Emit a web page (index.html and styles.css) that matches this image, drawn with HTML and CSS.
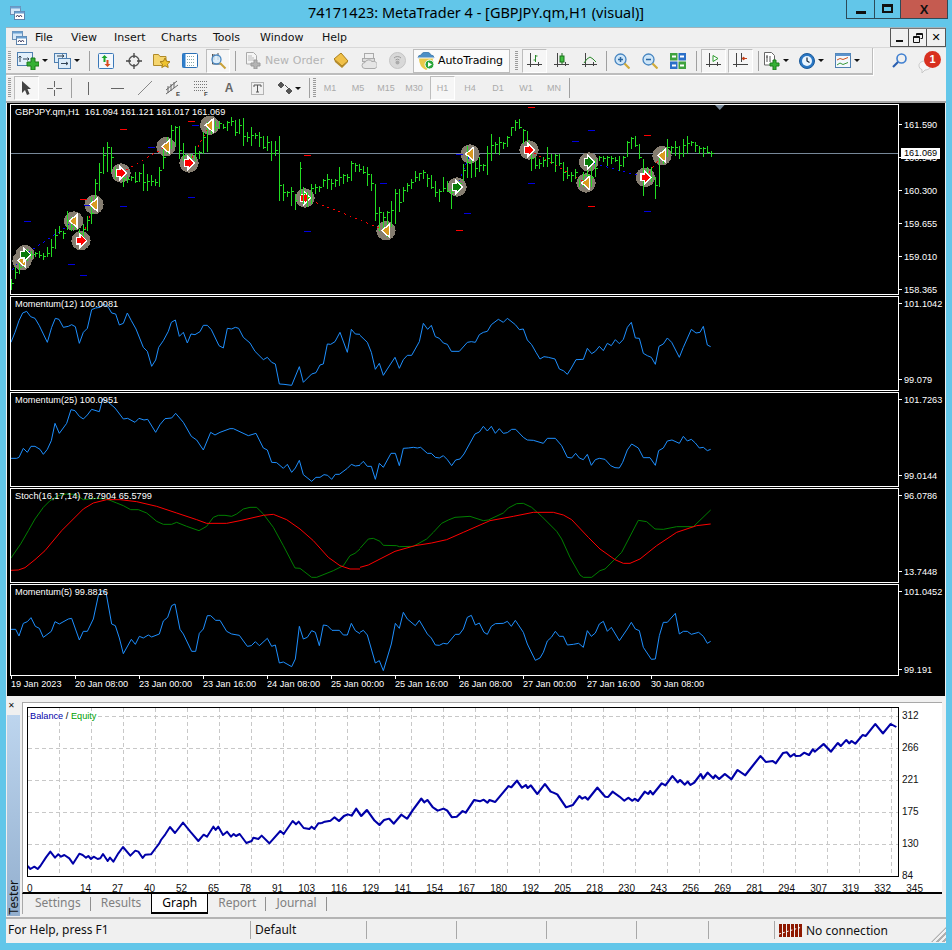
FILE: index.html
```html
<!DOCTYPE html>
<html lang="en">
<head>
<meta charset="utf-8">
<title>74171423: MetaTrader 4 - [GBPJPY.qm,H1 (visual)]</title>
<link rel="stylesheet" href="styles.css">
</head>
<body>
<header class="titlebar">
  <div class="title-left">
    <svg width="16" height="16" viewBox="0 0 16 16"><rect x="1.5" y="1.5" width="10" height="8" fill="#d5e8f8" stroke="#6a8fb5"/><rect x="1.5" y="1.5" width="10" height="2" fill="#6a9fd0"/><rect x="5.5" y="6.5" width="10" height="8" fill="#fff" stroke="#5c82aa"/><rect x="5.5" y="6.5" width="10" height="2" fill="#6a9fd0"/><path d="M7 12l1.500-2 1.500 2 1.500-2 1.500 2" fill="none" stroke="#446"/></svg>
  </div>
  <div class="title-text">74171423: MetaTrader 4 - [GBPJPY.qm,H1 (visual)]</div>
  <div class="winctl">
    <span class="wc wc-min"><i class="min-glyph"></i></span>
    <span class="wc wc-max"><i class="max-glyph"></i></span>
    <span class="wc wc-close">X</span>
  </div>
</header>

<main class="client">
  <nav class="menubar">
    <svg class="menu-icon" width="16" height="16" viewBox="0 0 16 16"><rect x="1.500" y="1.500" width="10" height="8" fill="#d5e8f8" stroke="#6a8fb5"/><rect x="1.500" y="1.500" width="10" height="2" fill="#6a9fd0"/><rect x="5.500" y="6.500" width="10" height="8" fill="#fff" stroke="#5c82aa"/><rect x="5.500" y="6.500" width="10" height="2" fill="#6a9fd0"/><path d="M7 12l1.500-2 1.500 2 1.500-2 1.500 2" fill="none" stroke="#446"/></svg>
    <span class="mi mi-file">File</span><span class="mi mi-view">View</span><span class="mi mi-insert">Insert</span><span class="mi mi-charts">Charts</span><span class="mi mi-tools">Tools</span><span class="mi mi-window">Window</span><span class="mi">Help</span>
    <div class="mdi">
      <span class="mdi-b"><i class="mdi-min"></i></span>
      <span class="mdi-b"><svg width="10" height="10" viewBox="0 0 10 10"><path d="M3.500 2.500V.5h6v5h-2M.5 3.500h6v6h-6z M.5 4.500h6M3.500 1.500h6" fill="none" stroke="#111"/></svg></span>
      <span class="mdi-b mdi-x">✕</span>
    </div>
  </nav>

  <div class="row row-1">
    <div class="bar bar-1">
      <i class="grip"></i>
      <span class="dd dd-a"><svg width="22" height="18" viewBox="0 0 22 18"><path d="M2.500 1v11h10M1 4h3M1 8h3M9 5h4" fill="none" stroke="#4a6f95"/><rect x=".5" y=".5" width="15" height="13" fill="#e3f0fb" stroke="#4f7fb0"/><path d="M3 10V4M1.500 5.500L3 4l1.500 1.500M6 7h6M10.500 5.500L12 7l-1.500 1.500" fill="none" stroke="#345"/><path d="M10 10h4V6h4v4h4v4h-4v4h-4v-4h-4z" fill="#34b034" stroke="#1a7a1a"/></svg><b class="arr"></b></span>
      <span class="dd dd-b"><svg width="17" height="16" viewBox="0 0 17 16"><rect x=".5" y=".5" width="12" height="9" fill="#dcecf9" stroke="#4f7fb0"/><rect x="4.500" y="5.500" width="12" height="10" fill="#dcecf9" stroke="#4f7fb0"/><path d="M3 3h7M8 1.500L10 3 8 4.500M7 10.500h7M12 9l2 1.500-2 1.500" fill="none" stroke="#345"/></svg><b class="arr"></b></span>
      <i class="sep s3"></i>
      <span class="b b-m2"><svg width="16" height="16" viewBox="0 0 16 16"><rect x=".5" y=".5" width="15" height="15" rx="1" fill="#f3f8fd" stroke="#3b78b8"/><path d="M5.500 9V5H3.500L6.500 2l3 3h-2v4z" fill="#19a52a"/><path d="M8.500 7v4h-2l3 3 3-3h-2V7z" fill="#d84a1e"/></svg></span>
      <span class="b"><svg width="16" height="16" viewBox="0 0 16 16"><circle cx="8" cy="8" r="5" fill="none" stroke="#555" stroke-width="1.300"/><path d="M8 0v5M8 11v5M0 8h5M11 8h5" stroke="#444" stroke-width="1.300"/></svg></span>
      <span class="b"><svg width="18" height="16" viewBox="0 0 18 16"><path d="M.5 3V1.500h5l1.500 2h6v9H.5z" fill="#f5d56e" stroke="#b08a28"/><path d="M12 5l1.600 3.300 3.400.4-2.500 2.400.7 3.400-3.200-1.700-3.200 1.700.7-3.400L7 8.700l3.400-.4z" fill="#eec32f" stroke="#a97f17"/></svg></span>
      <span class="b"><svg width="16" height="15" viewBox="0 0 16 15"><rect x=".5" y=".5" width="15" height="14" rx="1" fill="#fff" stroke="#2b70b5"/><rect x=".5" y=".5" width="3" height="14" fill="#2f7fcc"/><path d="M5 3.500h8M5 6.500h8M5 9.500h8M5 12.500h8" stroke="#8aa" stroke-dasharray="1 1"/></svg></span>
      <span class="press p24"><svg width="18" height="18" viewBox="0 0 18 18"><path d="M3.500 2v10h9M5 2v6M9 1v7" fill="none" stroke="#555"/><circle cx="7.500" cy="7.500" r="4.500" fill="#d8ecfb" fill-opacity=".8" stroke="#4a86bf" stroke-width="1.300"/><path d="M11 11l5.500 5.500" stroke="#c9a23a" stroke-width="2"/></svg></span>
      <i class="sep s5"></i>
      <svg class="ml9" width="16" height="17" viewBox="0 0 16 17"><path d="M1.500.5h7l3 3V12h-10z" fill="#f5f5f5" stroke="#aaa"/><path d="M3 4h4M3 6h6M3 8h6" stroke="#bbb"/><path d="M6 11h3V8h3v3h3v3h-3v3H9v-3H6z" fill="#b4b4b4" stroke="#999"/></svg>
      <span class="neworder">New Order</span>
      <span class="b b-m6"><svg width="16" height="15" viewBox="0 0 16 15"><path d="M1 6l7-6 7 8-6 5z" fill="#f0c048" stroke="#a87e1c"/><path d="M1 6l1 3 7 6 6-6v-1l-6 5z" fill="#b48a28"/></svg></span>
      <span class="b"><svg width="16" height="16" viewBox="0 0 16 16"><rect x="3.500" y=".5" width="9" height="6" fill="#eee" stroke="#aaa"/><rect x="1.500" y="5.500" width="12" height="3" fill="#ddd" stroke="#aaa"/><path d="M4 15.500a3 3 0 0 1 0-6 4 4 0 0 1 7-1 3.500 3.500 0 0 1 3 7z" fill="#e5e5e5" stroke="#aaa"/></svg></span>
      <span class="b"><svg width="17" height="17" viewBox="0 0 17 17"><circle cx="8.500" cy="8.500" r="8" fill="#d8d8d8" stroke="#c4c4c4"/><path d="M5 6a5 5 0 0 1 7 0M6.500 8a3 3 0 0 1 4 0" fill="none" stroke="#999"/><circle cx="8.500" cy="10.500" r="2" fill="#aaa"/></svg></span>
      <span class="auto">
        <svg width="18" height="18" viewBox="0 0 18 18"><path d="M1 6q0-3 3-3 1-3 5-3t5 3q3 0 3 3z" fill="#4d8fc5" stroke="#2d6a9f" stroke-width=".6"/><path d="M2 6h14q0 9-7 12-7-3-7-12z" fill="#e9c94a"/><path d="M1 6h16" stroke="#fff"/><circle cx="12.500" cy="12.500" r="4.500" fill="#2aa53a" stroke="#fff"/><path d="M11 10v5l4-2.500z" fill="#fff"/></svg>
        <span class="auto-t">AutoTrading</span>
      </span>
      <i class="grip g5"></i>
      <span class="press p25 pm4"><svg width="15" height="15" viewBox="0 0 15 15"><path d="M3.500 0v14M0 11.500h15M11.500 9v4" stroke="#444" fill="none"/><path d="M8.500 9V2M8.500 3h2M6.500 7h2" stroke="#2b8a2b" fill="none"/></svg></span>
      <span class="b"><svg width="15" height="15" viewBox="0 0 15 15"><path d="M3.500 0v14M0 11.500h15M11.500 9v4" stroke="#444" fill="none"/><rect x="6" y="3" width="4" height="6" fill="#3fc13f" stroke="#1d6f1d"/><path d="M8 0v3M8 9v2" stroke="#1d6f1d"/></svg></span>
      <span class="b"><svg width="15" height="15" viewBox="0 0 15 15"><path d="M3.500 0v14M0 11.500h15M11.500 9v4" stroke="#444" fill="none"/><path d="M2 10l3-4 3-2 3 2 3 3" stroke="#2b8a2b" fill="none"/></svg></span>
      <i class="sep s3"></i>
      <span class="b b-m1"><svg width="16" height="16" viewBox="0 0 16 16"><circle cx="6.500" cy="6.500" r="5.500" fill="#cfe6f8" stroke="#4785c0" stroke-width="1.300"/><path d="M4 6.500h5M6.500 4v5" stroke="#2a66a0" stroke-width="1.500"/><path d="M10.500 10.500l5 5" stroke="#d0ab3a" stroke-width="2.200"/></svg></span>
      <span class="b"><svg width="16" height="16" viewBox="0 0 16 16"><circle cx="6.500" cy="6.500" r="5.500" fill="#cfe6f8" stroke="#4785c0" stroke-width="1.300"/><path d="M4 6.500h5" stroke="#2a66a0" stroke-width="1.500"/><path d="M10.500 10.500l5 5" stroke="#d0ab3a" stroke-width="2.200"/></svg></span>
      <span class="b"><svg width="16" height="16" viewBox="0 0 16 16"><rect width="7.500" height="7.500" fill="#3fa23f"/><rect x="8.500" width="7.500" height="7.500" fill="#2b6fc8"/><rect y="8.500" width="7.500" height="7.500" fill="#2b6fc8"/><rect x="8.500" y="8.500" width="7.500" height="7.500" fill="#3fa23f"/><path d="M2 3.500h4M10 3.500h4M2 12.500h4M10 12.500h4" stroke="#fff" stroke-width="2"/></svg></span>
      <i class="sep s4"></i>
      <span class="press p25 pm4"><svg width="15" height="15" viewBox="0 0 15 15"><path d="M3.500 0v14M0 11.500h15M11.500 9v4" stroke="#444" fill="none"/><path d="M7 2.500v6l5-3z" fill="#fff" stroke="#2b9a2b"/></svg></span>
      <span class="press p25 pm2"><svg width="15" height="15" viewBox="0 0 15 15"><path d="M3.500 0v14M0 11.500h15M8.500 0v9" stroke="#444" fill="none"/><path d="M14 5.500h-3V4L9 5.500 11 7V5.500" stroke="#c8401a" fill="#c8401a"/></svg></span>
      <i class="sep s5"></i>
      <span class="dd dd-c"><svg width="17" height="18" viewBox="0 0 17 18"><path d="M1.500.5h7l3 3V13h-10z" fill="#fff" stroke="#666"/><path d="M4 3v7M3 5h2M7 4v6" stroke="#555"/><path d="M7 11h3V8h3v3h3v3h-3v4h-3v-4H7z" fill="#34b034" stroke="#1a7a1a"/></svg><b class="arr"></b></span>
      <span class="dd dd-c"><svg width="16" height="16" viewBox="0 0 16 16"><circle cx="8" cy="8" r="7.500" fill="#2a77c4" stroke="#1b5a9a"/><circle cx="8" cy="8" r="5" fill="#eaf5ff"/><path d="M8 4.500V8l2.500 1.500" fill="none" stroke="#123" stroke-width="1.200"/></svg><b class="arr"></b></span>
      <span class="dd dd-c"><svg width="16" height="15" viewBox="0 0 16 15"><rect x=".5" y=".5" width="15" height="14" fill="#f3f8fd" stroke="#4f7fb0"/><rect x=".5" y=".5" width="15" height="2.500" fill="#5b93cc"/><path d="M2 7l3-1.500 3 1 5-2" fill="none" stroke="#d0541e"/><path d="M2 12l3-2 3 1.500 5-2" fill="none" stroke="#3a9a3a"/></svg><b class="arr"></b></span>
    </div>
    <svg class="search" width="15" height="15" viewBox="0 0 15 15"><circle cx="9.500" cy="5.500" r="4.500" fill="none" stroke="#3f7fd0" stroke-width="1.600"/><path d="M6 9l-5 5" stroke="#2a5fb0" stroke-width="2.200"/></svg>
    <span class="chat">
      <svg width="14" height="14" viewBox="0 0 14 14"><path d="M7 2c3.300 0 6 1.800 6 4.300S10.300 11 7 11l-3 3v-3.400C2 10 1 8.400 1 6.300 1 3.800 3.700 2 7 2z" fill="#f6f6f6" stroke="#c8c8c8"/></svg>
      <span class="badge">1</span>
    </span>
  </div>

  <div class="row row-2">
    <div class="bar bar-2">
      <i class="grip"></i>
      <span class="press p25 pm3"><svg width="11" height="15" viewBox="0 0 11 15"><path d="M1 0v12l3-3 2 5 2.500-1-2-5H10z" fill="#444"/></svg></span>
      <span class="b b-m1"><svg width="15" height="15" viewBox="0 0 15 15"><path d="M7.500 0v6M7.500 9v6M0 7.500h6M9 7.500h6" stroke="#666"/></svg></span>
      <i class="sep s3"></i>
      <span class="b b-m2"><svg width="3" height="13" viewBox="0 0 3 13"><path d="M1.500 0v13" stroke="#666"/></svg></span>
      <span class="b b-m1"><svg width="13" height="3" viewBox="0 0 13 3"><path d="M0 1.500h13" stroke="#666"/></svg></span>
      <span class="b"><svg width="14" height="14" viewBox="0 0 14 14"><path d="M0 14L14 0" stroke="#888"/></svg></span>
      <span class="b"><svg width="16" height="16" viewBox="0 0 16 16"><path d="M1 10L12 1M1 14L13 5M3 13V6M6 11V4M9 8V2" stroke="#666" fill="none"/><text x="11" y="16" class="sv-e">E</text></svg></span>
      <span class="b"><svg width="15" height="16" viewBox="0 0 15 16"><path d="M0 1.500h14M0 4.500h14M0 7.500h14M0 10.500h12" stroke="#777" stroke-dasharray="1 1"/><text x="10" y="16" class="sv-e">F</text></svg></span>
      <span class="b glyph-a">A</span>
      <span class="b"><svg width="13" height="13" viewBox="0 0 13 13"><rect x=".5" y=".5" width="12" height="12" fill="none" stroke="#777" stroke-dasharray="1 1"/><path d="M3 3h7v2M6.500 3v7M5 10h3M3 3v2" fill="none" stroke="#555"/></svg></span>
      <span class="dd dd-d"><svg width="14" height="13" viewBox="0 0 14 13"><path d="M3 0l3 3-3 3-3-3zM7 3l4 4M11 6l3 3-3 3-3-3z" fill="#555" stroke="#555"/></svg><b class="arr"></b></span>
      <i class="sep s2"></i>
      <i class="grip g3"></i>
      <span class="b tf">M1</span><span class="b tf">M5</span><span class="b tf">M15</span><span class="b tf">M30</span>
      <span class="press p25 pm2 tf">H1</span>
      <span class="b b-m1 tf">H4</span><span class="b tf">D1</span><span class="b tf">W1</span><span class="b tf">MN</span>
      <i class="sep s1"></i>
    </div>
  </div>

  <section class="chart">
    <div class="pane pane-main">
      <div class="plot">
        <svg class="plotsvg" width="887" height="189" viewBox="11 106 887 189">
          <path class="priceline" d="M11 154.500H898"/>
          <g transform="translate(0 105) scale(.33333)" class="z">
            <g class="disc"><circle cx="75" cy="452" r="29"/><circle cx="66" cy="470" r="29"/><circle cx="221" cy="351" r="29"/><circle cx="243" cy="410" r="29"/><circle cx="282" cy="302" r="29"/><circle cx="363" cy="207" r="29"/><circle cx="498" cy="128" r="29"/><circle cx="567" cy="177" r="29"/><circle cx="629" cy="64" r="29"/><circle cx="915" cy="282" r="29"/></g>
            <path class="dash-b" d="M36 498L75 452L190 375L221 351"/>
            <path class="dash-r" d="M243 410L282 302M363 207L498 128M567 177L629 64"/>
            <path class="mk-r" d="M360 78h22M240 286h22M564 52h22M912 154h22"/>
            <path class="mk-b" d="M72 352h22M444 130h22M360 307h22M204 481h22M240 514h22M564 280h22M576 64h22M252 304h20M912 382h22"/>
            <path class="mk-g" d="M360 78h0M354 -3M363 78"/>
            <path class="bars" d="M36 525V557M36 540h6M48 490V525M48 505h6M60 470V510M60 490h6M72 440V490M72 462h6M84 435V470M84 450h6M96 440V465M96 452h6M108 445V460M108 450h6M120 442V462M120 455h6M132 448V468M132 458h6M144 430V460M144 450h6M156 405V460M156 430h6M168 375V435M168 395h6M180 365V390M180 382h6M192 380V405M192 390h6M204 320V378M204 350h6M216 340V380M216 368h6M228 350V378M228 358h6M240 375V425M240 390h6M252 360V410M252 378h6M264 335V380M264 350h6M276 280V360M276 330h6M288 225V295M288 240h6M300 178V260M300 205h6M312 130V210M312 155h6M324 114V205M324 130h6M336 130V205M336 160h6M348 190V225M348 205h6M360 190V225M360 215h6M372 215V248M372 225h6M384 215V238M384 228h6M396 215V232M396 222h6M408 205V237M408 232h6M420 205V235M420 208h6M432 180V260M432 235h6M444 210V262M444 232h6M456 212V245M456 232h6M468 225V245M468 235h6M480 190V248M480 200h6M492 120V195M492 160h6M504 100V150M504 125h6M516 62V135M516 80h6M528 65V125M528 70h6M540 65V165M540 140h6M552 118V170M552 155h6M564 150V195M564 170h6M576 150V190M576 178h6M588 125V170M588 150h6M600 140V165M600 145h6M612 85V150M612 100h6M624 55V145M624 70h6M636 50V90M636 62h6M648 50V80M648 70h6M660 52V75M660 58h6M672 60V75M672 72h6M684 50V80M684 55h6M696 40V65M696 52h6M708 48V95M708 85h6M720 45V90M720 65h6M732 42V125M732 98h6M744 85V115M744 100h6M756 70V125M756 95h6M768 88V105M768 95h6M780 85V130M780 100h6M792 95V135M792 130h6M804 95V140M804 115h6M816 110V170M816 150h6M828 110V155M828 140h6M840 95V290M840 245h6M852 240V290M852 265h6M864 260V280M864 265h6M876 250V305M876 262h6M888 270V318M888 290h6"/>
            <g class="ar-o"><use href="#ol" x="66" y="470"/><use href="#ol" x="221" y="351"/><use href="#ol" x="282" y="302"/><use href="#ol" x="498" y="128"/><use href="#ol" x="629" y="64"/></g>
            <use href="#gr" x="75" y="452"/>
            <use href="#rd" x="243" y="410"/><use href="#rd" x="363" y="207"/><use href="#rd" x="567" y="177"/><use href="#rd" x="915" y="282"/>
          </g>
          <g transform="translate(300 105) scale(.33333)" class="z">
            <g class="disc"><circle cx="258" cy="380" r="29"/><circle cx="471" cy="249" r="29"/><circle cx="510" cy="150" r="29"/><circle cx="687" cy="138" r="29"/><circle cx="866" cy="174" r="29"/><circle cx="858" cy="237" r="29"/><circle cx="1036" cy="220" r="29"/><circle cx="1086" cy="155" r="29"/></g>
            <path class="dash-r" d="M15 282L258 380M687 138L858 237M1036 220L1086 155"/>
            <path class="dash-b" d="M471 249L510 150M866 174L1036 220"/>
            <path class="mk-r" d="M684 10h21M12 154h21M468 380h22M864 307h21M1032 94h21"/>
            <path class="mk-b" d="M240 238h21M12 382h21M492 328h21M468 151h22M684 238h21M816 112h21M864 79h21M1032 322h21"/>
            <path class="bars" d="M0 175V275M0 195h6M12 250V300M12 270h6M24 265V310M24 280h6M36 240V300M36 255h6M48 240V270M48 250h6M60 245V265M60 250h6M72 225V250M72 230h6M84 210V255M84 228h6M96 225V258M96 240h6M108 225V250M108 230h6M120 188V245M120 222h6M132 210V240M132 215h6M144 210V235M144 220h6M156 172V230M156 180h6M168 178V205M168 185h6M180 180V205M180 198h6M192 185V210M192 205h6M204 190V245M204 212h6M216 210V260M216 240h6M228 240V350M228 330h6M240 310V380M240 325h6M252 325V375M252 340h6M264 320V400M264 325h6M276 290V370M276 320h6M288 255V360M288 270h6M300 255V325M300 295h6M312 250V295M312 260h6M324 238V265M324 245h6M336 225V255M336 235h6M348 200V235M348 220h6M360 208V230M360 210h6M372 198V225M372 205h6M384 210V250M384 225h6M396 212V255M396 250h6M408 230V280M408 265h6M420 255V295M420 262h6M432 220V265M432 255h6M444 230V265M444 262h6M456 255V315M456 265h6M468 235V275M468 250h6M480 235V265M480 240h6M492 180V230M492 200h6M504 125V222M504 175h6M516 150V222M516 170h6M528 170V220M528 195h6M540 160V205M540 185h6M552 180V200M552 185h6M564 125V212M564 150h6M576 90V170M576 125h6M588 115V150M588 122h6M600 100V152M600 115h6M612 115V135M612 120h6M624 95V130M624 100h6M636 68V95M636 70h6M648 48V80M648 55h6M660 45V75M660 70h6M672 75V120M672 80h6M684 80V140M684 120h6M696 130V200M696 165h6M708 160V195M708 185h6M720 165V195M720 180h6M732 160V190M732 170h6M744 130V190M744 165h6M756 150V180M756 175h6M768 150V205M768 155h6M780 150V185M780 180h6M792 175V230M792 205h6M804 190V225M804 215h6M816 205V235M816 215h6M828 195V225M828 205h6M840 225V250M840 240h6M852 205V250M852 215h6M864 175V255M864 215h6M876 175V250M876 220h6M888 165V220M888 195h6M900 155V170M900 160h6M912 155V175M912 165h6M924 155V185M924 160h6M936 155V180M936 165h6M948 160V175M948 170h6M960 155V200M960 185h6M972 155V190M972 160h6M984 110V160M984 115h6M996 100V135M996 105h6M1008 95V130M1008 125h6M1020 120V165M1020 160h6M1032 165V275M1032 210h6M1044 190V235M1044 215h6M1056 190V235M1056 220h6M1068 220V285M1068 245h6M1080 150V250M1080 155h6M1092 135V180M1092 150h6M1104 105V160M1104 130h6M1116 125V150M1116 130h6M1128 110V155M1128 130h6M1140 125V165M1140 150h6M1152 105V160M1152 125h6M1164 97V150M1164 120h6M1176 110V125M1176 115h6M1188 115V145M1188 125h6M1200 125V150M1200 135h6M1212 128V158M1212 135h6M1224 125V150M1224 145h6M1236 140V158M1236 148h6"/>
            <use href="#ol" x="258" y="380"/><use href="#ol" x="510" y="150"/><use href="#ol" x="858" y="237"/><use href="#ol" x="1086" y="155"/>
            <use href="#gr" x="471" y="249"/><use href="#gr" x="866" y="174"/>
            <use href="#rd" x="687" y="138"/><use href="#rd" x="1036" y="220"/>
          </g>
          <path class="shift" d="M715 106h9.500l-4.700 5z"/>
          <defs>
            <path id="ol" d="M10-19V19L-13 0z" fill="#d99a20" stroke="#fff" stroke-width="4"/>
            <path id="gr" d="M-13-10h10v-10L17 0-3 20V10h-10z" fill="#0a7a0a" stroke="#fff" stroke-width="4"/>
            <path id="rd" d="M-13-10h10v-10L17 0-3 20V10h-10z" fill="#f00" stroke="#fff" stroke-width="4"/>
          </defs>
        </svg>
        <span class="plabel">GBPJPY.qm,H1&nbsp; 161.094 161.121 161.017 161.069</span>
      </div>
      <div class="axis axis-main">
        <span>161.590</span><span>160.945</span><span>160.300</span><span>159.655</span><span>159.010</span><span>158.365</span>
        <span class="curprice">161.069</span>
      </div>
    </div>

    <div class="pane pane-sub">
      <div class="plot">
        <svg class="plotsvg" width="887" height="93" viewBox="11 298 887 93">
          <g transform="translate(0 295) scale(.33333)"><path class="ln-blue" d="M33 145L45 115L57 80L68 57L80 52L92 68L105 73L118 95L142 145L155 100L166 73L177 76L190 100L205 97L215 92L226 98L238 148L250 115L262 103L275 47L287 42L300 40L312 30L325 40L335 57L347 60L358 93L370 88L382 57L394 80L408 105L430 160L442 172L455 217L467 198L476 160L490 140L505 112L514 85L526 78L538 127L550 115L562 147L573 120L585 122L600 113L610 94L622 94L634 107L657 155L670 162L682 103L695 105L706 100L716 103L730 130L750 147L765 172L790 197L802 190L815 205L826 210L838 270L852 271L875 274L898 218L910 265L935 240L948 236L960 213L970 210L982 150L992 151L1005 143L1020 115L1042 175L1054 106L1066 120L1080 121"/></g>
          <g transform="translate(360 295) scale(.33333)"><path class="ln-blue" d="M0 124L22 145L34 175L46 226L58 208L70 244L82 225L105 190L118 223L130 197L142 184L155 184L178 143L190 88L203 106L214 94L226 128L238 133L250 147L262 151L274 172L298 172L322 145L334 143L346 145L358 122L370 115L382 112L394 92L415 76L430 85L442 73L466 92L478 107L490 105L502 138L515 152L528 175L540 195L552 188L565 190L585 195L598 225L610 230L622 241L634 222L648 197L670 196L682 163L695 179L706 172L718 157L730 170L742 148L754 155L766 137L778 149L790 136L802 100L814 85L826 132L838 133L850 178L862 185L874 190L886 211L897 157L910 150L922 132L935 145L958 190L970 160L994 106L1008 117L1020 115L1030 97L1042 153L1052 158"/></g>
        </svg>
        <span class="plabel">Momentum(12) 100.0081</span>
      </div>
      <div class="axis"><span>101.1042</span><span>99.079</span></div>
    </div>

    <div class="pane pane-sub">
      <div class="plot">
        <svg class="plotsvg" width="887" height="93" viewBox="11 394 887 93">
          <g transform="translate(0 295) scale(.33333)"><path class="ln-blue" d="M33 493L50 493L57 490L70 463L82 475L93 457L105 457L120 466L130 481L142 466L154 440L165 388L178 418L200 388L213 347L225 350L238 367L250 375L262 363L275 346L298 353L308 315L325 325L345 342L370 375L383 373L405 385L417 373L432 378L443 376L467 415L480 392L495 374L515 372L527 358L550 385L574 427L590 438L610 468L632 415L645 423L660 415L690 404L700 404L745 425L768 418L790 462L802 468L815 505L830 506L850 523L862 511L875 535L886 522L898 499L910 542L935 562L948 550L960 550L972 542L983 544L995 556L1006 541L1018 541L1042 523L1054 511L1066 516L1080 514"/></g>
          <g transform="translate(360 295) scale(.33333)"><path class="ln-blue" d="M0 512L10 502L22 517L34 517L46 556L58 508L70 520L93 478L106 478L118 515L130 463L145 462L160 460L172 462L182 460L202 478L214 478L226 490L238 492L250 485L262 497L275 515L287 498L300 495L312 480L345 420L358 414L370 397L382 411L394 397L406 418L418 404L430 418L442 416L455 406L467 406L490 430L502 438L520 439L550 448L562 433L586 433L605 455L622 490L635 492L647 478L658 492L670 497L682 481L694 514L706 497L718 493L735 496L752 515L765 521L778 522L788 505L802 468L815 450L835 462L850 491L870 491L886 514L896 470L910 462L922 441L936 438L958 448L970 427L982 441L994 436L1006 447L1018 462L1030 460L1042 470L1052 466"/></g>
        </svg>
        <span class="plabel">Momentum(25) 100.0951</span>
      </div>
      <div class="axis"><span>101.7263</span><span>99.0144</span></div>
    </div>

    <div class="pane pane-sub">
      <div class="plot">
        <svg class="plotsvg" width="887" height="93" viewBox="11 490 887 93">
          <g transform="translate(0 490) scale(.33333)"><path class="ln-green" d="M33 207L62 165L85 125L105 90L130 55L150 35L175 20L200 15L225 16L250 32L290 28L320 30L350 42L370 50L392 62L415 62L440 72L470 97L490 106L515 106L530 100L560 112L597 125L620 112L640 85L655 79L675 79L695 82L710 75L730 60L750 55L770 55L790 75L820 115L850 170L885 237L900 238L935 265L950 265L1000 245L1030 230L1050 200L1065 193L1080 180"/><path class="ln-red" d="M33 244L55 243L75 236L105 212L135 185L185 125L250 60L280 42L320 32L360 32L410 38L470 52L530 72L590 92L620 103L680 103L720 95L790 79L820 76L860 92L900 120L940 155L985 205L1020 230L1050 240L1080 240"/></g>
          <g transform="translate(360 490) scale(.33333)"><path class="ln-green" d="M0 178L25 150L40 148L60 157L70 169L110 170L118 173L160 172L200 150L220 130L245 103L265 93L285 85L330 82L345 87L370 95L385 93L430 72L445 57L470 44L490 43L515 55L545 82L590 127L605 150L630 205L660 258L670 265L695 265L720 245L735 240L750 225L785 190L835 94L860 98L885 120L910 121L950 113L1000 113L1052 63"/><path class="ln-red" d="M0 235L25 228L105 187L165 170L215 162L260 152L310 130L390 95L460 82L520 70L580 70L610 78L635 92L685 145L720 180L765 212L790 223L810 223L840 210L890 170L950 130L1010 110L1052 105"/></g>
        </svg>
        <span class="plabel">Stoch(16,17,14) 78.7904 65.5799</span>
      </div>
      <div class="axis"><span>96.0786</span><span>13.7448</span></div>
    </div>

    <div class="pane pane-last">
      <div class="plot">
        <svg class="plotsvg" width="887" height="90" viewBox="11 586 887 90">
          <g transform="translate(0 490) scale(.33333)"><path class="ln-blue" d="M33 421L47 421L57 441L70 403L82 398L93 386L106 412L118 418L130 445L154 427L165 398L178 405L205 390L215 388L238 453L250 427L262 427L280 390L295 320L305 305L318 310L335 405L346 410L358 447L370 494L394 451L406 466L418 442L430 447L445 438L455 444L478 435L490 396L503 385L515 350L525 345L540 421L550 435L575 487L587 487L598 433L610 420L622 380L632 380L647 394L660 394L680 427L695 435L718 439L742 472L754 470L766 458L778 470L802 448L815 472L826 468L838 522L850 519L875 533L886 510L898 412L910 450L922 445L935 425L946 430L958 470L970 408L982 410L996 424L1018 424L1030 438L1042 438L1054 403L1066 425L1080 434"/></g>
          <g transform="translate(360 490) scale(.33333)"><path class="ln-blue" d="M0 430L10 424L22 438L46 522L58 515L70 545L94 465L106 403L118 418L130 370L142 390L166 410L178 394L202 435L214 447L226 468L238 469L250 463L262 465L286 436L298 436L310 420L322 385L334 379L346 408L358 402L372 430L382 436L394 412L406 404L430 403L442 397L454 412L466 394L490 430L502 465L526 514L540 507L550 490L562 456L574 445L586 427L598 442L610 442L622 468L640 466L656 463L670 475L682 425L694 442L706 432L718 405L730 397L742 427L754 415L778 455L802 420L814 400L826 420L838 425L850 475L874 511L886 510L898 440L910 400L922 400L946 373L958 435L970 427L982 427L994 436L1016 430L1030 442L1042 463L1052 457"/></g>
        </svg>
        <span class="plabel">Momentum(5) 99.8816</span>
      </div>
      <div class="axis"><span>101.0452</span><span>99.191</span></div>
    </div>

    <div class="timeaxis">
      <span>19 Jan 2023</span><span>20 Jan 08:00</span><span>23 Jan 00:00</span><span>23 Jan 16:00</span><span>24 Jan 08:00</span><span>25 Jan 00:00</span><span>25 Jan 16:00</span><span>26 Jan 08:00</span><span>27 Jan 00:00</span><span>27 Jan 16:00</span><span>30 Jan 08:00</span>
    </div>
  </section>

  <section class="tester">
    <aside class="side">
      <span class="side-x">✕</span>
      <div class="side-strip"><span class="side-t">Tester</span></div>
    </aside>
    <div class="tester-main">
      <div class="report">
        <div class="graph-row">
          <div class="graph">
            <svg class="graphsvg" width="870" height="168" viewBox="27 708 870 168">
              <path class="gridln" d="M58.500 708V876M90.500 708V876M122.500 708V876M154.500 708V876M186.500 708V876M218.500 708V876M250.500 708V876M282.500 708V876M314.500 708V876M346.500 708V876M378.500 708V876M410.500 708V876M442.500 708V876M474.500 708V876M506.500 708V876M538.500 708V876M570.500 708V876M602.500 708V876M634.500 708V876M666.500 708V876M698.500 708V876M730.500 708V876M762.500 708V876M794.500 708V876M826.500 708V876M858.500 708V876M890.500 708V876"/>
              <path class="gridln" d="M27 716.500H897M27 748.500H897M27 780.500H897M27 812.500H897M27 844.500H897"/>
              <g transform="translate(0 680) scale(.33333)"><path class="ln-bal" d="M80 558L88 567L100 560L110 567L118 558L135 532L148 515L162 533L172 523L180 530L190 525L205 535L216 551L235 521L245 525L255 533L262 528L270 537L278 530L290 537L298 535L306 522L320 543L327 533L337 545L352 520L366 501L388 527L403 512L412 515L425 534L433 524L450 523L462 507L475 490L480 480L493 463L507 441L522 459L546 428L568 455L592 483L608 464L618 470L637 440L644 450L652 440L666 465L678 455L690 470L698 462L705 468L716 462L736 489L752 483L757 473L772 477L782 467L805 490L838 453L848 462L875 423L885 433L893 425L908 444L925 447L932 440L940 447L952 430L960 430"/></g>
              <g transform="translate(320 700) scale(.38280 .33333)"><path class="ln-bal2" d="M0 370L10 365L25 362L35 352L47 363L60 348L70 343L80 347L92 326L105 348L120 330L140 362L153 375L165 360L178 356L190 371L210 344L225 356L240 330L262 296L270 307L278 300L292 322L305 332L320 326L330 332L342 352L355 350L370 333L378 338L400 300L415 304L425 299L435 308L440 300L455 306L490 258L497 262L512 242L525 263L535 255L540 264L548 256L565 282L585 252L600 275L607 278L617 283L640 322L658 315L675 288L682 296L690 291L697 299L722 263L742 290L750 291L762 275L780 290L792 302L803 293L813 302L820 296L828 303L846 275L855 282L860 273L867 283L890 250L900 256L918 228L932 247L938 240L950 254L958 245L965 255L975 248L992 222L998 236L1010 218L1025 235L1030 226L1040 237L1055 222L1072 238L1088 210L1108 226L1148 168L1162 186L1180 183L1188 190L1207 159L1217 157L1226 170L1236 162L1240 168L1252 167L1262 158L1275 165L1285 148L1290 155L1313 132L1332 155L1350 129L1358 138L1372 120L1380 130L1386 123L1396 131L1415 105L1423 108L1448 72L1468 100L1488 72L1503 81"/></g>
            </svg>
            <span class="legend"><span class="lg-b">Balance</span> <span class="lg-k">/</span> <span class="lg-g">Equity</span></span>
          </div>
          <div class="gaxis"><span>312</span><span>266</span><span>221</span><span>175</span><span>130</span><span>84</span></div>
        </div>
        <div class="gxlabels">
          <span>0</span><span>14</span><span>27</span><span>40</span><span>52</span><span>65</span><span>78</span><span>91</span><span>103</span><span>116</span><span>129</span><span>141</span><span>154</span><span>167</span><span>180</span><span>192</span><span>205</span><span>218</span><span>230</span><span>243</span><span>256</span><span>269</span><span>281</span><span>294</span><span>307</span><span>319</span><span>332</span><span>345</span>
        </div>
      </div>
      <div class="tabs">
        <span class="tab tab-sep">Settings</span><span class="tab tab-r">Results</span><span class="tab tab-on">Graph</span><span class="tab tab-sep">Report</span><span class="tab tab-sep">Journal</span>
      </div>
    </div>
  </section>

  <footer class="status">
    <span class="st st-help">For Help, press F1</span>
    <span class="st st-def">Default</span>
    <span class="st st-e1"></span><span class="st st-e2"></span><span class="st st-e3"></span><span class="st st-e4"></span><span class="st st-e5"></span>
    <span class="st st-conn">
      <svg width="24" height="13" viewBox="0 0 24 13"><path d="M0 0h3v13H0zM4 0h3v13H4zM8 0h3v13H8zM12 0h3v13h-3zM16 0h3v13h-3zM20 0h3v13h-3z" fill="#8e1800"/><path d="M0 10L23 3" stroke="#fff" stroke-width="1" stroke-dasharray="2 2"/></svg>
      <span>No connection</span>
    </span>
    <i class="resize"></i>
  </footer>
</main>
</body>
</html>
```

FILE: styles.css
```css
* { box-sizing: border-box; }
html, body { margin: 0; padding: 0; }
body {
  width: 952px; height: 950px; overflow: hidden;
  background: #62c6e9;
  font-family: "DejaVu Sans", sans-serif;
  color: #000;
}
i, b { display: block; font-style: normal; }
svg { display: block; flex: none; }

/* title bar */
.titlebar { height: 27px; display: grid; grid-template-columns: 1fr auto 1fr; align-items: start; }
.title-left { padding: 5px 0 0 9px; }
.title-text { font: 14.5px/1 "Noto Sans", sans-serif; padding-top: 5px; color: #000; }
.winctl { justify-self: end; margin-right: 4px; display: flex; height: 19px; border: 1px solid #2c4a58; border-top: 0; }
.wc { display: flex; align-items: center; justify-content: center; height: 18px; }
.wc-min { width: 28px; border-right: 1px solid #2c4a58; }
.wc-max { width: 26px; border-right: 1px solid #2c4a58; }
.wc-close { width: 46px; background: #c55b50; font: bold 13px "Liberation Sans", sans-serif; color: #111; }
.min-glyph { width: 10px; height: 3px; background: #111; margin-top: 7px; }
.max-glyph { width: 11px; height: 9px; border: 2px solid #111; border-top-width: 3px; margin-top: -2px; }

.client { margin: 0 6px; height: 916px; background: #f0f0f0; border-top: 1px solid #9fb3bb; display: flex; flex-direction: column; }

/* menu */
.menubar { height: 20px; display: flex; align-items: center; font-size: 11px; position: relative; border-bottom: 1px solid #d8d8d8; }
.menu-icon { margin-left: 5px; margin-right: 8px; }
.mi { color: #111; flex: none; }
.mi-file { width: 36px; letter-spacing: -.2px; }
.mi-view { width: 43px; }
.mi-insert { width: 47px; }
.mi-charts { width: 52px; }
.mi-tools { width: 47px; }
.mi-window { width: 62px; }
.mdi { margin-left: auto; display: flex; height: 19px; margin-right: 0; border: 1px solid #555; border-top: 1px solid #777; }
.mdi-b { width: 18px; display: flex; align-items: center; justify-content: center; border-right: 1px solid #555; background: #f0f0f0; }
.mdi-b:last-child { border-right: 0; }
.mdi-min { width: 7px; height: 2px; background: #111; margin-top: 6px; }
.mdi-x { font: bold 11px "DejaVu Sans", sans-serif; }

/* toolbars */
.row { display: flex; align-items: stretch; }
.row-1 { height: 27px; }
.row-2 { height: 27px; border-top: 1px solid #fff; border-bottom: 0; }
.row-2 { height: 28px; border-top: 0; border-bottom: 2px solid #a6a6a6; }
.bar { display: flex; align-items: center; height: 100%; }
.bar-1 { width: 867px; padding-left: 2px; border-right: 1px solid #bdbdbd; border-bottom: 2px solid #bdbdbd; box-shadow: 1px 1px 0 #fff; }
.bar-2 { width: 564px; padding-left: 2px; }
.grip { width: 3px; height: 20px; background: repeating-linear-gradient(to bottom, #9a9a9a 0 1px, transparent 1px 2px); flex: none; }
.g5 { margin-left: 5px; }
.g3 { margin-left: 3px; }
.sep { width: 1px; height: 20px; background: #a0a0a0; flex: none; }
.s1 { margin-left: 1px; }
.s2 { margin-left: 2px; }
.s3 { margin-left: 3px; }
.s4 { margin-left: 4px; }
.s5 { margin-left: 5px; }
.b { width: 28px; height: 24px; display: flex; align-items: center; justify-content: center; flex: none; }
.b-m1 { margin-left: 1px; }
.b-m2 { margin-left: 2px; }
.b-m6 { margin-left: 6px; }
.press { height: 24px; display: flex; align-items: center; justify-content: center; flex: none; border: 1px solid #bdbdbd; border-right-color: #fff; border-bottom-color: #fff; background: #f6f6f6; }
.p24 { width: 24px; margin-left: 2px; }
.p25 { width: 25px; }
.pm2 { margin-left: 2px; }
.pm3 { margin-left: 3px; }
.pm4 { margin-left: 4px; }
.dd { display: flex; align-items: center; flex: none; height: 24px; }
.dd-a { width: 36px; margin-left: 3px; padding-left: 3px; }
.dd-b { width: 36px; padding-left: 4px; }
.dd-c { width: 36px; padding-left: 4px; }
.dd-d { width: 32px; margin-left: 4px; padding-left: 3px; }
.arr { width: 0; height: 0; margin-left: 3px; border: 3px solid transparent; border-top: 3px solid #111; border-bottom: 0; }
.ml9 { margin-left: 9px; }
.neworder { font: 11px/1 "DejaVu Sans", sans-serif; color: #b4b4b4; margin-left: 4px; width: 56px; white-space: nowrap; letter-spacing: .05px; }
.auto { width: 97px; height: 24px; margin-left: 2px; display: flex; align-items: center; gap: 3px; padding-left: 3px; border: 1px solid #bdbdbd; flex: none; background: #fbfbfb; }
.auto-t { font: 11px/1 "DejaVu Sans", sans-serif; letter-spacing: -.08px; white-space: nowrap; }
.search { margin-left: 19px; margin-top: 5px; }
.chat { position: relative; margin-left: 11px; width: 23px; }
.chat svg { position: absolute; left: 0; top: 11px; }
.badge { position: absolute; left: 6px; top: 3px; width: 17px; height: 17px; border-radius: 50%; background: #d8301f; color: #fff; font: bold 11px/17px "Liberation Sans", sans-serif; text-align: center; }
.sv-e { font: bold 6px "Liberation Sans", sans-serif; fill: #444; }
.glyph-a { font: bold 12px "Liberation Sans", sans-serif; color: #666; }
.tf { font: 9px "Liberation Sans", sans-serif; color: #aaa; }

/* chart */
.chart { height: 593px; margin: 0 1px; padding: 1px 0 0 3px; background: #000; display: flex; flex-direction: column; gap: 1px; flex: none; }
.pane { display: flex; flex: none; }
.pane-main { height: 191px; }
.pane-sub { height: 95px; }
.pane-last { height: 92px; }
.plot { position: relative; width: 889px; border: 1px solid #fff; flex: none; }
.plotsvg { position: absolute; left: 0; top: 0; }
.plabel { position: absolute; left: 4px; top: 2px; font: 9.200px/10px "Liberation Sans", sans-serif; color: #fff; white-space: nowrap; }
.z, .bars { shape-rendering: crispEdges; }
.priceline { stroke: #778899; fill: none; }
.disc circle { fill: #857d70; }
.bars { fill: none; stroke: #22dd22; stroke-width: 3; }
.mk-r, .mk-b, .mk-g { fill: none; stroke-width: 3; }
.mk-r { stroke: #f00; }
.mk-b { stroke: #0000e0; }
.dash-b, .dash-r { fill: none; stroke-width: 3; stroke-dasharray: 6 12; }
.dash-b { stroke: #0000ff; }
.dash-r { stroke: #f00; }
.shift { fill: #778899; }
.ln-blue, .ln-green, .ln-red { fill: none; stroke-width: 3; shape-rendering: crispEdges; stroke-linejoin: round; }
.ln-blue { stroke: #1e90ff; }
.ln-green { stroke: #008000; }
.ln-red { stroke: #f00; }

.axis { position: relative; width: 46px; display: flex; flex-direction: column; justify-content: space-between; padding: 3px 0 0; font: 9.200px/12px "Liberation Sans", sans-serif; color: #fff; flex: none; }
.axis span { display: block; padding-left: 5px; position: relative; }
.axis span::before { content: ""; position: absolute; left: 0; top: 5px; width: 3px; height: 1px; background: #fff; }
.pane-sub .axis { padding: 2px 0 5px; }
.pane-last .axis { padding: 2px 0 0; }
.axis-main { padding: 15px 0 0; justify-content: flex-start; gap: 21px; }
.axis .curprice { position: absolute; left: 2px; top: 44px; width: 39px; height: 11px; padding: 0 0 0 3px; background: #fff; color: #000; line-height: 11px; }
.axis .curprice::before { display: none; }
.timeaxis { height: 19px; display: flex; margin-top: -1px; color: #fff; font: 9.200px/1 "Liberation Sans", sans-serif; padding-left: 1px; }
.timeaxis span { width: 64px; flex: none; position: relative; padding-top: 4px; white-space: nowrap; }
.timeaxis span::before { content: ""; position: absolute; left: 0; top: 0; width: 1px; height: 3px; background: #fff; }

/* tester */
.tester { height: 221px; display: flex; flex: none; padding-top: 6px; }
.side { width: 16px; position: relative; flex: none; }
.side-x { position: absolute; left: 2px; top: -1px; font: bold 8px/10px "DejaVu Sans", sans-serif; color: #111; }
.side-strip { position: absolute; left: 1px; top: 13px; bottom: 1px; width: 13px; background: linear-gradient(#bdd5ee, #93afce); }
.side-t { position: absolute; left: 0; bottom: 2px; writing-mode: vertical-rl; transform: rotate(180deg); font: 12px/13px "Noto Sans", sans-serif; color: #111; }
.tester-main { flex: 1; display: flex; flex-direction: column; padding-right: 4px; }
.report { height: 192px; background: #fff; border-left: 1px solid #a8a8a8; border-top: 1px solid #a8a8a8; border-bottom: 2px solid #000; padding: 4px 0 0 4px; flex: none; }
.graph-row { display: flex; }
.graph { position: relative; width: 872px; height: 170px; border: 1px solid #000; flex: none; }
.graphsvg { position: absolute; left: 0; top: 0; }
.gridln { fill: none; stroke: #c8c8c8; stroke-dasharray: 4 3; shape-rendering: crispEdges; }
.ln-bal { fill: none; stroke: #0000a8; stroke-width: 6; stroke-linejoin: round; }
.ln-bal2 { fill: none; stroke: #0000a8; stroke-width: 6; stroke-linejoin: round; }
.legend { position: absolute; left: 2px; top: 3px; font: 9.200px/10px "Liberation Sans", sans-serif; white-space: nowrap; background: #fff; }
.lg-b { color: #0000a8; }
.lg-g { color: #00a000; }
.gaxis { display: flex; flex-direction: column; padding: 3px 0 0 3px; font: 10px/12px "Liberation Sans", sans-serif; gap: 20px; }
.gaxis span { display: block; position: relative; padding-left: 0; color: #111; }
.gxlabels { display: flex; font: 10px/12px "Liberation Sans", sans-serif; color: #111; padding-top: 1px; }
.gxlabels span { width: 32px; text-align: right; flex: none; }
.gxlabels span:first-child { text-align: left; width: 32px; }
.tabs { display: flex; height: 20px; padding-left: 2px; font: 12px/18px "Noto Sans", sans-serif; color: #808080; border-left: 1px solid #a8a8a8; }
.tab { padding: 0 10px; flex: none; position: relative; height: 18px; }
.tab-sep::after, .tab-r::after { content: ""; position: absolute; right: 0; top: 3px; width: 1px; height: 14px; background: #909090; }
.tab-r::after { display: none; }
.tab-on { background: #fff; color: #000; border: 1px solid #000; border-top: 0; border-bottom-width: 2px; height: 20px; margin-left: 0; }

/* status */
.status { height: 25px; flex: none; display: flex; align-items: stretch; border-top: 2px solid #b4b4b4; font: 12px/22px "Noto Sans", sans-serif; color: #111; position: relative; }
.st { display: block; padding-left: 5px; flex: none; position: relative; }
.st::before { content: ""; position: absolute; left: 0; top: 2px; bottom: 3px; width: 1px; background: #a8a8a8; }
.st-help { width: 244px; padding-left: 2px; }
.st-help::before { display: none; }
.st-def { width: 116px; }
.st-e1 { width: 90px; }
.st-e2 { width: 90px; }
.st-e3 { width: 90px; }
.st-e4 { width: 72px; }
.st-e5 { width: 66px; }
.st-conn { display: flex; align-items: center; gap: 3px; width: 120px; padding-left: 5px; }
.resize { position: absolute; right: 0; bottom: 0; width: 15px; height: 15px; background: repeating-linear-gradient(135deg, transparent 0 2px, #b0b0b0 2px 4px); clip-path: polygon(100% 0, 100% 100%, 0 100%); }
```
